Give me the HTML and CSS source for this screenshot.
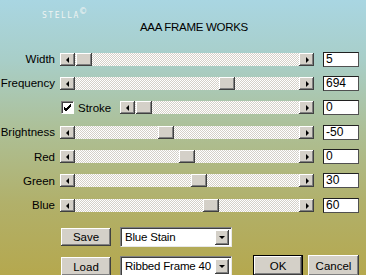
FILE: index.html
```html
<!DOCTYPE html>
<html lang="en">
<head>
  <meta charset="UTF-8">
  <title>AAA Frame Works</title>
  <link rel="stylesheet" href="styles.css">
</head>
<body>
  <div class="dialog">
    <div class="brand">STELLA<span class="copy">©</span></div>
    <h1 class="title">AAA FRAME WORKS</h1>

    <div class="params">
      <span class="name">Width</span>
      <div class="slider">
        <span class="arrow left"></span>
        <div class="track"><span class="thumb" style="left:1px"></span></div>
        <span class="arrow right"></span>
      </div>
      <div class="field">5</div>

      <span class="name">Frequency</span>
      <div class="slider">
        <span class="arrow left"></span>
        <div class="track"><span class="thumb" style="left:144px"></span></div>
        <span class="arrow right"></span>
      </div>
      <div class="field">694</div>

      <span class="name"></span>
      <div class="stroke">
        <span class="check">
          <svg width="9" height="9" viewBox="0 0 9 9"><path d="M1 4 L3 6 L8 1 M1 5 L3 7 L8 2 M1 6 L3 8 L8 3" stroke="#000" stroke-width="1" fill="none"/></svg>
        </span>
        <span class="stroke-label">Stroke</span>
        <div class="slider">
          <span class="arrow left"></span>
          <div class="track"><span class="thumb" style="left:1px"></span></div>
          <span class="arrow right"></span>
        </div>
      </div>
      <div class="field">0</div>

      <span class="name">Brightness</span>
      <div class="slider">
        <span class="arrow left"></span>
        <div class="track"><span class="thumb" style="left:83px"></span></div>
        <span class="arrow right"></span>
      </div>
      <div class="field">-50</div>

      <span class="name">Red</span>
      <div class="slider">
        <span class="arrow left"></span>
        <div class="track"><span class="thumb" style="left:104px"></span></div>
        <span class="arrow right"></span>
      </div>
      <div class="field">0</div>

      <span class="name">Green</span>
      <div class="slider">
        <span class="arrow left"></span>
        <div class="track"><span class="thumb" style="left:116px"></span></div>
        <span class="arrow right"></span>
      </div>
      <div class="field">30</div>

      <span class="name">Blue</span>
      <div class="slider">
        <span class="arrow left"></span>
        <div class="track"><span class="thumb" style="left:128px"></span></div>
        <span class="arrow right"></span>
      </div>
      <div class="field">60</div>
    </div>

    <div class="actions">
      <div class="action-row">
        <button class="btn">Save</button>
        <div class="select"><span class="value">Blue Stain</span><span class="drop"></span></div>
      </div>
      <div class="action-row bottom">
        <button class="btn">Load</button>
        <div class="select"><span class="value">Ribbed Frame 40</span><span class="drop"></span></div>
        <div class="confirm">
          <button class="btn default">OK</button>
          <button class="btn">Cancel</button>
        </div>
      </div>
    </div>
  </div>
</body>
</html>
```

FILE: styles.css
```css
body {
  margin: 0;
  font-family: 'Liberation Sans', Arial, sans-serif;
  font-size: 11px;
  color: #000;
}

.dialog {
  width: 366px;
  height: 275px;
  overflow: hidden;
  background: linear-gradient(to bottom, #a9d6e2 0%, #a8cec8 22%, #adbf95 48%, #b1b06a 74%, #b5a84e 100%);
}

.brand {
  padding: 10px 0 0 42px;
  height: 10px;
  line-height: 10px;
  font-family: 'DejaVu Sans Mono', monospace;
  font-size: 8px;
  letter-spacing: 1.5px;
  color: #eef3f2;
}

.brand .copy {
  position: relative;
  top: -4px;
  font-size: 10px;
  letter-spacing: 0;
}

.title {
  margin: 0;
  padding-left: 140px;
  height: 14px;
  line-height: 14px;
  font-size: 11.5px;
  font-weight: normal;
  letter-spacing: -0.3px;
}

.params {
  display: grid;
  grid-template-columns: 55px 254px 45px;
  grid-auto-rows: 16px;
  column-gap: 5px;
  row-gap: 8.4px;
  align-items: center;
  margin-top: 17px;
}

.name {
  text-align: right;
  font-size: 11.5px;
  line-height: 16px;
}

.slider {
  display: flex;
  height: 13px;
}

.arrow,
.thumb,
.btn,
.drop {
  background-color: #d4d0c8;
  box-shadow: inset -1px -1px #404040, inset 1px 1px #fff, inset -2px -2px #808080;
}

.arrow {
  position: relative;
  width: 15px;
  flex: none;
}

.arrow::after {
  content: '';
  position: absolute;
  top: 4px;
  left: 6px;
  border-top: 3px solid transparent;
  border-bottom: 3px solid transparent;
}

.arrow.left::after {
  border-right: 3px solid #000;
}

.arrow.right::after {
  left: 7px;
  border-left: 3px solid #000;
}

.track {
  position: relative;
  flex: 1;
  background: repeating-conic-gradient(#d4d0c8 0 25%, #fff 0 50%) 0 0 / 2px 2px;
}

.thumb {
  position: absolute;
  top: 0;
  width: 16px;
  height: 13px;
}

.field {
  margin-left: 4px;
  width: 36px;
  height: 15px;
  box-sizing: border-box;
  padding-left: 2px;
  background: #fff;
  border: 1px solid #202020;
  border-right-color: #505050;
  border-bottom-color: #505050;
  font-size: 12px;
  line-height: 13px;
}

.stroke {
  display: flex;
  align-items: center;
  padding-left: 1px;
}

.check {
  display: flex;
  align-items: center;
  justify-content: center;
  width: 13px;
  height: 13px;
  box-sizing: border-box;
  background: #fff;
  border: 1px solid #808080;
  border-right-color: #fff;
  border-bottom-color: #fff;
  box-shadow: inset 1px 1px #404040;
}

.stroke-label {
  margin-left: 4px;
  width: 42px;
  font-size: 11.5px;
}

.stroke .slider {
  flex: 1;
}

.actions {
  margin-top: 14px;
  padding-left: 61px;
}

.action-row {
  display: flex;
  align-items: center;
  gap: 9px;
  height: 20px;
}

.action-row.bottom {
  margin-top: 8px;
  height: 21px;
  align-items: flex-end;
}

.btn {
  width: 50px;
  height: 18px;
  padding: 0;
  border: none;
  font-family: inherit;
  font-size: 11.5px;
  color: #000;
}

.bottom .btn {
  height: 19px;
}

.select {
  display: flex;
  align-items: center;
  justify-content: space-between;
  width: 112px;
  height: 20px;
  box-sizing: border-box;
  padding: 2px 2px 2px 4px;
  background: #fff;
  border: 1px solid #808080;
  border-right-color: #e8e8e8;
  border-bottom-color: #e8e8e8;
  box-shadow: inset 1px 1px #404040;
  font-size: 11.5px;
}

.select .value {
  white-space: nowrap;
  letter-spacing: -0.2px;
}

.drop {
  position: relative;
  flex: none;
  width: 14px;
  height: 15px;
}

.drop::after {
  content: '';
  position: absolute;
  top: 6px;
  left: 4px;
  border-left: 3px solid transparent;
  border-right: 3px solid transparent;
  border-top: 3px solid #000;
}

.confirm {
  display: flex;
  gap: 5px;
  margin-left: 12px;
}

.confirm .btn {
  height: 21px;
}

.btn.default {
  outline: 1px solid #000;
  outline-offset: -1px;
  box-shadow: inset -2px -2px #404040, inset 2px 2px #fff, inset -3px -3px #808080;
}

.confirm .btn:last-child {
  width: 51px;
}
```
